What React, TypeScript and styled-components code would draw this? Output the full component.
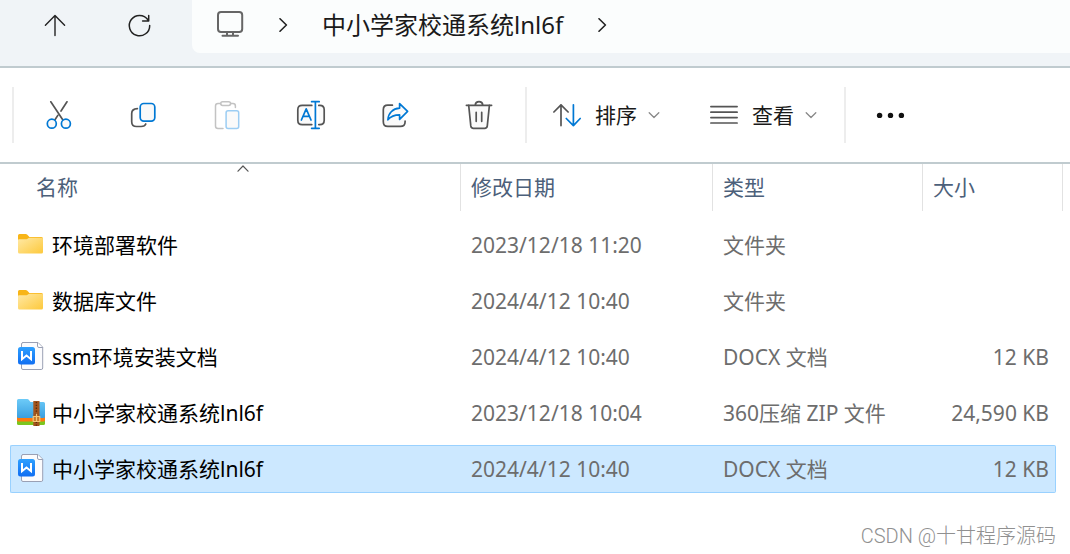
import React from "react";
import styled, { createGlobalStyle, css } from "styled-components";

const GlobalStyle = createGlobalStyle`
  *, *::before, *::after { box-sizing: border-box; }
  body {
    margin: 0;
    background: #fff;
    color: #000;
    font-family: "Noto Sans", "Noto Sans CJK SC", sans-serif;
    font-size: 21px;
    line-height: 28px;
  }
`;

const ink = "#555";
const blue = "#0078d4";

const Window = styled.main`
  display: flex;
  flex-direction: column;
`;

const NavBar = styled.nav`
  display: flex;
  align-items: flex-start;
  height: 68px;
  padding-left: 13px;
  background: #f0f4f7;
  border-bottom: 2px solid #c0cbcf;
`;

const IconButton = styled.button<{ $height?: number }>`
  display: flex;
  align-items: center;
  justify-content: center;
  flex: none;
  width: 84px;
  height: ${(p) => p.$height ?? 56}px;
  padding: 0;
  border: 0;
  background: none;
`;

const AddressBar = styled.div`
  display: flex;
  align-items: center;
  flex: 1;
  gap: 32px;
  height: 53px;
  margin-left: 11px;
  padding: 0 24px 3px;
  background: #fbfdfd;
  border-bottom-left-radius: 8px;
`;

const Crumb = styled.a`
  color: #1a1a1a;
  font-size: 24px;
  line-height: 32px;
  text-decoration: none;
  white-space: nowrap;
`;

const Toolbar = styled.div`
  display: flex;
  align-items: center;
  height: 96px;
  padding-left: 8px;
  border-bottom: 2px solid #c0cbcf;
`;

const Separator = styled.span`
  flex: none;
  width: 2px;
  height: 56px;
  margin: 0 3px 0 4px;
  background: #ededed;
`;

const MenuGroup = styled.div`
  display: flex;
  gap: 4px;
`;

const MenuButton = styled.button`
  display: flex;
  align-items: center;
  height: 56px;
  padding: 0 23px;
  border: 0;
  background: none;
  color: #1a1a1a;
  font: inherit;
  white-space: nowrap;
`;

const MenuLabel = styled.span`
  margin: 0 11px 0 14px;
`;

const Svg = styled.svg`
  display: block;
  flex: none;
  fill: none;
  stroke-linecap: round;
  stroke-linejoin: round;
`;

const FileTable = styled.table`
  align-self: stretch;
  width: calc(100% - 17px);
  margin: -8px 7px 0 10px;
  table-layout: fixed;
  border-collapse: separate;
  border-spacing: 0 8px;
`;

const Col = styled.col<{ $width?: number }>`
  ${(p) => p.$width && `width: ${p.$width}px;`}
`;

const HeadCell = styled.th`
  position: relative;
  height: 49px;
  padding: 0;
  color: #4c607a;
  font-weight: 400;
  text-align: left;
  vertical-align: top;
`;

const HeadLabel = styled.div<{ $edge?: "left" | "right"; $indent?: number }>`
  height: 47px;
  padding: 9px 0 0 ${(p) => p.$indent ?? 10}px;
  ${(p) => p.$edge && `border-${p.$edge}: 1px solid #e2e2e2;`}
`;

const SortMark = styled.span`
  position: absolute;
  top: 1px;
  left: 16px;
  right: 0;
  display: flex;
  justify-content: center;
`;

const Cell = styled.td<{ $right?: boolean }>`
  height: 48px;
  padding: 0 7px 0 11px;
  color: #6d6d6d;
  text-align: ${(p) => (p.$right ? "right" : "left")};
  white-space: nowrap;
`;

const NameCell = styled(Cell)`
  padding: 0 0 0 6px;
  color: #000;
`;

const FileName = styled.span`
  display: flex;
  align-items: center;
  gap: 6px;
`;

const selectedCell = css`
  background: #cce8ff;
  border: 1px solid #99d1ff;
  border-width: 1px 0;
`;

const Row = styled.tr<{ $selected?: boolean }>`
  ${(p) =>
    p.$selected &&
    css`
      ${Cell} { ${selectedCell} }
      ${NameCell} {
        padding-left: 5px;
        border-left-width: 1px;
        border-radius: 2px 0 0 2px;
      }
      ${Cell}:nth-child(4) {
        padding-right: 6px;
        border-right-width: 1px;
        border-radius: 0 2px 2px 0;
      }
    `}
`;

const Watermark = styled.footer`
  margin-top: 21px;
  padding-right: 14px;
  color: #909090;
  font-family: Roboto, "Noto Sans CJK SC", sans-serif;
  font-size: 20px;
  font-weight: 300;
  text-align: right;
`;

const icon = (size: number, stroke = ink, width = 1.7) => ({
  width: size,
  height: size,
  viewBox: `0 0 ${size} ${size}`,
  stroke,
  strokeWidth: width,
  "aria-hidden": true,
});

const UpIcon = () => (
  <Svg {...icon(28, "#222", 1.4)}>
    <path d="M14 24.6V4.6M4.4 14.2L14 4.4l9.6 9.8" />
  </Svg>
);

const RefreshIcon = () => (
  <Svg {...icon(28, "#222", 1.5)}>
    <path d="M24.7 14.4A10.2 10.2 0 1 1 22.9 8.8M23.7 4.4V10H17.6" />
  </Svg>
);

const MonitorIcon = () => (
  <Svg {...icon(28, "#666", 2)}>
    <rect x="2" y="1" width="24.2" height="20" rx="3" />
    <path d="M11 21v3.500M17 21v3.500M6.500 24.800h15.500" />
  </Svg>
);

const CrumbChevron = () => (
  <Svg {...icon(14, "#222", 1.6)}>
    <path d="M4 .8l6.400 6.200L4 13.200" />
  </Svg>
);

const CutIcon = () => (
  <Svg {...icon(30)}>
    <path d="M6.8 1.8L18.9 20M23 1.8L17 11M13.8 15.4L10.8 20" />
    <circle cx="7.8" cy="23.7" r="4.5" stroke={blue} fill="#fafafa" />
    <circle cx="21.9" cy="23.7" r="4.5" stroke={blue} fill="#fafafa" />
  </Svg>
);

const CopyIcon = () => (
  <Svg {...icon(30)}>
    <path d="M9.4 8.6C5.2 8.8 3.7 10.4 3.7 13.5v8.2q0 4.8 4.8 4.8h4.6q3.8 0 4.7-2.5" />
    <rect x="12.2" y="3.5" width="14.6" height="17.6" rx="3.6" stroke={blue} fill="#f9f9f9" />
  </Svg>
);

const PasteIcon = () => (
  <Svg {...icon(30, "#c3c3c3", 1.5)}>
    <path d="M8.6 3.6H6Q3.5 3.6 3.5 6v20q0 2.5 2.5 2.5h5M18.6 3.6H21q2.4 0 2.4 2.4v1.4" />
    <rect x="8.7" y="1.7" width="9.9" height="3.8" rx="1.9" />
    <rect x="14.1" y="10.8" width="12.6" height="17.7" rx="2" stroke="#9ccdf3" fill="#fafafa" />
  </Svg>
);

const RenameIcon = () => (
  <Svg {...icon(30)}>
    <path
      fill="#fafafa"
      d="M15.8 5.4H6.2Q1.8 5.4 1.8 9.8v10.4q0 4.4 4.4 4.4h9.6M22.8 5.4h1q4.4 0 4.4 4.4v10.4q0 4.4-4.4 4.4h-1"
    />
    <path stroke={blue} d="M5.4 20L10.2 8.8 15 20M7 16.4h6.4M19.4 1.8v26.4M15.6 1.7h7.6M15.6 28.3h7.6" />
  </Svg>
);

const ShareIcon = () => (
  <Svg {...icon(30)}>
    <path fill="#fafafa" d="M12.4 5.2H7.8q-4.5 0-4.5 4.5v12q0 4.7 4.5 4.7h12.6q4.7 0 4.7-4.7V21" />
    <path
      stroke={blue}
      fill="#fafafa"
      d="M19.6 3.6l8 7.8-8 8v-4.5c-5.4 0-8.9 1.5-11.7 4.9C8.2 13.4 12.6 8.6 19.6 8.2z"
    />
  </Svg>
);

const DeleteIcon = () => (
  <Svg {...icon(30)}>
    <path fill="#fafafa" d="M4.7 5.4l2.1 20.5q.3 2.4 2.6 2.4h11.3q2.3 0 2.6-2.4l2.1-20.5" />
    <path d="M2.4 5.3h25.2M11.2 5q.4-3.3 3.8-3.3T18.8 5M12.2 12.3v9M17.7 12.3v9" />
  </Svg>
);

const SortIcon = () => (
  <Svg {...icon(28)}>
    <path d="M8 24.6V3.8M.9 11L8 3.8 15.1 11" />
    <path stroke={blue} d="M20.4 3.8v20.8M13.3 17.5l7.1 7.1 6.8-7.1" />
  </Svg>
);

const ViewIcon = () => (
  <Svg {...icon(28)}>
    <path d="M.9 5.6h26.2M.9 11.2h26.2M.9 16.6h26.2M.9 22h26.2" />
  </Svg>
);

const MenuChevron = () => (
  <Svg {...icon(12, "#888", 1.3)}>
    <path d="M1.2 3.8L6 8.5l4.8-4.7" />
  </Svg>
);

const MoreIcon = () => (
  <Svg {...icon(30, "none")}>
    <g fill="#111">
      <circle cx="3.6" cy="15.4" r="2.7" />
      <circle cx="14.5" cy="15.4" r="2.7" />
      <circle cx="25.4" cy="15.4" r="2.7" />
    </g>
  </Svg>
);

const FolderIcon = () => (
  <Svg {...icon(30, "none")}>
    <defs>
      <linearGradient id="folder" x1="0" y1="0" x2="1" y2="1">
        <stop offset="0" stopColor="#ffe9a6" />
        <stop offset="1" stopColor="#fdc93c" />
      </linearGradient>
    </defs>
    <path fill="#f8b517" d="M2 5.500Q2 4 3.500 4h6.200q.8 0 1.400.6L13.400 7h12.100Q27 7 27 8.500V12H2z" />
    <path fill="url(#folder)" d="M2 10.200q0-1 1-1h7.500q.8 0 1.400-.6l.8-.6q.5-.3 1-.3H26q1 0 1 1v13.200q0 1.500-1.500 1.500h-22Q2 23.400 2 21.900z" />
  </Svg>
);

const DocIcon = () => (
  <Svg {...icon(30, "#9aa0b4", 1)}>
    <defs>
      <linearGradient id="doc" x1="0" y1="0" x2="0" y2="1">
        <stop offset="0" stopColor="#2ea0ff" />
        <stop offset="1" stopColor="#0f6df2" />
      </linearGradient>
    </defs>
    <path fill="#fbfbfd" d="M7 .5h15l4.700 4.700v20.800q0 1.500-1.500 1.500H7q-1.500 0-1.500-1.500V2Q5.500.5 7 .5z" />
    <path fill="#fff" d="M21.500.7v3.300q0 1.500 1.500 1.500h3.500" />
    <rect x="2" y="5" width="17" height="17.500" rx="2.500" fill="url(#doc)" stroke="none" />
    <path stroke="#fff" strokeWidth="2" strokeLinejoin="miter" strokeLinecap="butt" d="M6 9v8.200l4.500-3.700 4.500 3.700V9" />
  </Svg>
);

const ZipIcon = () => (
  <Svg {...icon(30, "none")}>
    <defs>
      <linearGradient id="zip" x1="0" y1="0" x2="0" y2="1">
        <stop offset="0" stopColor="#6dcbf8" />
        <stop offset="1" stopColor="#3a9fe0" />
      </linearGradient>
    </defs>
    <path fill="#7cc61f" d="M1 21h28v4.500q0 1.500-1.500 1.500h-25Q1 27 1 25.500z" />
    <path fill="#ff7a0f" d="M1 18h28v4q0 1.500-1.500 1.500h-25Q1 23.500 1 22z" />
    <path fill="url(#zip)" d="M1 2.500Q1 1 2.500 1h8.700q1 0 1.600.8l1.700 2.200h13q1.500 0 1.500 1.500v13q0 1.500-1.500 1.500h-25Q1 20 1 18.500z" />
    <path fill="#a4551c" d="M17.300 3h6.200v25h-6.200z" />
    <path stroke="#5b2c0c" strokeWidth="1.400" strokeDasharray="1.300 1.500" strokeLinecap="butt" d="M20.400 4v24" />
    <rect x="17.200" y="18.500" width="6.600" height="5" fill="#c77a2c" stroke="#f5c77a" strokeWidth="1.200" />
    <path stroke="#f5c77a" strokeWidth="1.200" d="M20.500 16v7" />
  </Svg>
);

const fileIcons = { folder: FolderIcon, doc: DocIcon, zip: ZipIcon };

type FileEntry = {
  icon: keyof typeof fileIcons;
  name: string;
  date: string;
  type: string;
  size?: string;
  selected?: boolean;
};

const files: FileEntry[] = [
  { icon: "folder", name: "环境部署软件", date: "2023/12/18 11:20", type: "文件夹" },
  { icon: "folder", name: "数据库文件", date: "2024/4/12 10:40", type: "文件夹" },
  { icon: "doc", name: "ssm环境安装文档", date: "2024/4/12 10:40", type: "DOCX 文档", size: "12 KB" },
  { icon: "zip", name: "中小学家校通系统lnl6f", date: "2023/12/18 10:04", type: "360压缩 ZIP 文件", size: "24,590 KB" },
  { icon: "doc", name: "中小学家校通系统lnl6f", date: "2024/4/12 10:40", type: "DOCX 文档", size: "12 KB", selected: true },
];

const actions = [
  { label: "剪切", Icon: CutIcon },
  { label: "复制", Icon: CopyIcon },
  { label: "粘贴", Icon: PasteIcon, disabled: true },
  { label: "重命名", Icon: RenameIcon },
  { label: "共享", Icon: ShareIcon },
  { label: "删除", Icon: DeleteIcon },
];

export default function App() {
  return (
    <Window lang="zh-CN">
      <GlobalStyle />
      <NavBar>
        <IconButton aria-label="向上" $height={50}>
          <UpIcon />
        </IconButton>
        <IconButton aria-label="刷新" $height={50}>
          <RefreshIcon />
        </IconButton>
        <AddressBar>
          <MonitorIcon />
          <CrumbChevron />
          <Crumb href="#">中小学家校通系统lnl6f</Crumb>
          <CrumbChevron />
        </AddressBar>
      </NavBar>

      <Toolbar role="toolbar">
        <Separator />
        {actions.map(({ label, Icon, disabled }) => (
          <IconButton key={label} aria-label={label} disabled={disabled}>
            <Icon />
          </IconButton>
        ))}
        <Separator />
        <MenuGroup>
          <MenuButton>
            <SortIcon />
            <MenuLabel>排序</MenuLabel>
            <MenuChevron />
          </MenuButton>
          <MenuButton>
            <ViewIcon />
            <MenuLabel>查看</MenuLabel>
            <MenuChevron />
          </MenuButton>
        </MenuGroup>
        <Separator />
        <IconButton aria-label="更多">
          <MoreIcon />
        </IconButton>
      </Toolbar>

      <FileTable>
        <colgroup>
          <Col />
          <Col $width={252} />
          <Col $width={210} />
          <Col $width={134} />
          <Col $width={7} />
        </colgroup>
        <thead>
          <tr>
            <HeadCell scope="col" aria-sort="ascending">
              <HeadLabel $indent={26}>名称</HeadLabel>
              <SortMark>
                <Svg width={12} height={7} viewBox="0 0 12 7" stroke="#555" strokeWidth={1.2} aria-hidden>
                  <path d="M1 6.200L6 1l5 5.200" />
                </Svg>
              </SortMark>
            </HeadCell>
            <HeadCell scope="col">
              <HeadLabel $edge="left">修改日期</HeadLabel>
            </HeadCell>
            <HeadCell scope="col">
              <HeadLabel $edge="left">类型</HeadLabel>
            </HeadCell>
            <HeadCell scope="col">
              <HeadLabel $edge="left">大小</HeadLabel>
            </HeadCell>
            <HeadCell as="td">
              <HeadLabel $edge="right" $indent={0} />
            </HeadCell>
          </tr>
        </thead>
        <tbody>
          {files.map((file) => {
            const Icon = fileIcons[file.icon];
            return (
              <Row key={file.name + file.icon} $selected={file.selected} aria-selected={!!file.selected}>
                <NameCell>
                  <FileName>
                    <Icon />
                    {file.name}
                  </FileName>
                </NameCell>
                <Cell>{file.date}</Cell>
                <Cell>{file.type}</Cell>
                <Cell $right>{file.size}</Cell>
              </Row>
            );
          })}
        </tbody>
      </FileTable>

      <Watermark>CSDN @十甘程序源码</Watermark>
    </Window>
  );
}
